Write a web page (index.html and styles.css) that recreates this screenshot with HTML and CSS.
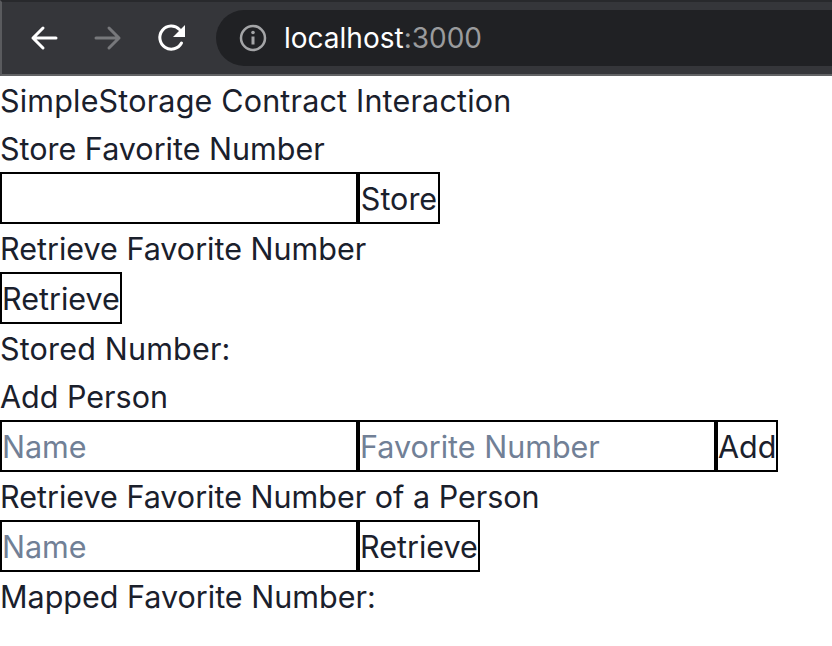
FILE: index.html
```html
<!DOCTYPE html>
<html lang="en">
<head>
<meta charset="utf-8">
<title>SimpleStorage</title>
<link rel="stylesheet" href="styles.css">
</head>
<body>
<header class="toolbar">
  <nav class="nav-icons">
    <svg class="icon" viewBox="0 0 30 30" width="30" height="30"><path d="M27 15H4M14 5 4 15l10 10" fill="none" stroke="#fff" stroke-width="3" stroke-linecap="round" stroke-linejoin="round"/></svg>
    <svg class="icon" viewBox="0 0 30 30" width="30" height="30"><path d="M3 15h23M16 5l10 10-10 10" fill="none" stroke="#77787b" stroke-width="3" stroke-linecap="round" stroke-linejoin="round"/></svg>
    <svg class="icon" viewBox="0 0 30 30" width="30" height="30"><path d="M24.500 20A11.500 11.500 0 1 1 22.500 6.500" fill="none" stroke="#fff" stroke-width="3" stroke-linecap="round"/><path d="M28 2v12H16z" fill="#fff"/></svg>
  </nav>
  <div class="omnibox">
    <svg class="info" viewBox="0 0 28 28" width="28" height="28"><circle cx="14" cy="14" r="12" fill="none" stroke="#a4a5a7" stroke-width="2.500"/><circle cx="14" cy="8.500" r="1.800" fill="#a4a5a7"/><path d="M14 12.500v8" stroke="#a4a5a7" stroke-width="3"/></svg>
    <span class="url">localhost<span class="port">:3000</span></span>
  </div>
</header>
<main class="app">
  <div class="label wide">SimpleStorage Contract Interaction</div>
  <div class="label">Store Favorite Number</div>
  <div class="row"><input class="field" type="text"><button class="btn store">Store</button></div>
  <div class="label">Retrieve Favorite Number</div>
  <div class="row"><button class="btn">Retrieve</button></div>
  <div class="label wide">Stored Number:</div>
  <div class="label">Add Person</div>
  <div class="row"><input class="field" type="text" placeholder="Name"><input class="field" type="text" placeholder="Favorite Number"><button class="btn">Add</button></div>
  <div class="label">Retrieve Favorite Number of a Person</div>
  <div class="row"><input class="field" type="text" placeholder="Name"><button class="btn">Retrieve</button></div>
  <div class="label">Mapped Favorite Number:</div>
</main>
</body>
</html>
```
FILE: styles.css
```css
* { box-sizing: border-box; }
html, body { margin: 0; padding: 0; background: #fff; }
body { width: 832px; height: 646px; overflow: hidden; font-family: Inter, "Liberation Sans", sans-serif; color: #1a202c; }
.toolbar { height: 76px; display: flex; align-items: center; background: #35363a; border-top: 2px solid #28292c; border-bottom: 2px solid #626365; border-left: 2px solid #5a5b5e; padding-left: 27px; }
.nav-icons { display: flex; gap: 34px; width: 187px; }
.icon { display: block; }
.omnibox { flex: 1; height: 56px; display: flex; align-items: center; background: #202124; border-radius: 28px 0 0 28px; padding-left: 23px; gap: 17px; }
.info { display: block; }
.url { color: #fff; font-size: 28px; }
.port { color: #9a9b9d; }
.app { font-size: 30.5px; line-height: 48px; }
.label { height: 48px; padding-top: 1px; }
.wide { letter-spacing: 0.18px; }
.row { display: flex; height: 52px; align-items: center; }
.field { width: 358px; height: 52px; border: 2px solid #000; background: #fff; font: inherit; color: inherit; padding: 0; margin: 0; border-radius: 0; outline: 0; }
.field::placeholder { color: #718096; opacity: 1; }
.btn { height: 52px; border: 2px solid #000; background: #fff; font: inherit; color: inherit; padding: 1px 0 0; margin: 0; border-radius: 0; }
.store { min-width: 82px; }
```
